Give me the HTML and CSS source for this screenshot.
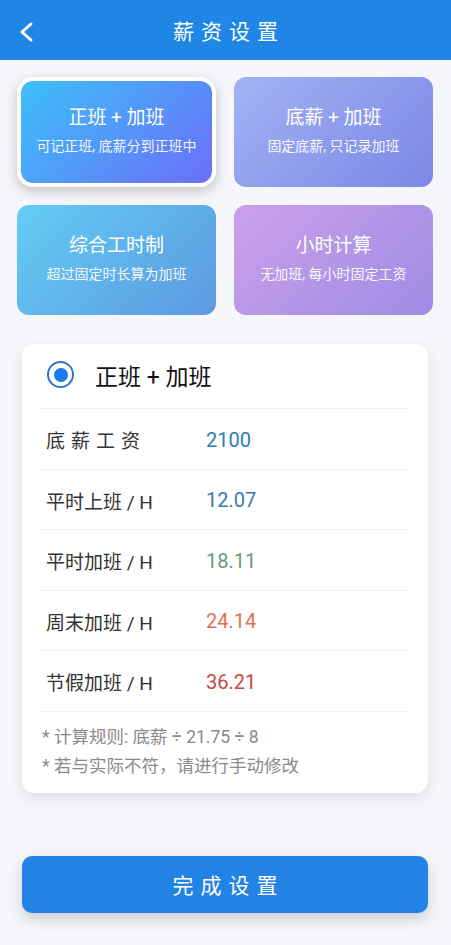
FILE: index.html
```html
<!DOCTYPE html>
<html lang="zh-CN">
<head>
  <meta charset="UTF-8">
  <meta name="viewport" content="width=device-width, initial-scale=1.0">
  <title>薪资设置</title>
  <link rel="stylesheet" href="styles.css">
</head>
<body>
  <header class="topbar">
    <span class="back">
      <svg width="16" height="22" viewBox="0 0 16 22"><path d="M13 3 L4 11 L13 19" fill="none" stroke="#fff" stroke-width="3" stroke-linecap="round" stroke-linejoin="round"/></svg>
    </span>
    <h1>薪资设置</h1>
  </header>

  <div class="modes">
    <div class="mode mode-a selected">
      <div class="mode-title">正班 + 加班</div>
      <div class="mode-sub">可记正班, 底薪分到正班中</div>
    </div>
    <div class="mode mode-b">
      <div class="mode-title">底薪 + 加班</div>
      <div class="mode-sub">固定底薪, 只记录加班</div>
    </div>
    <div class="mode mode-c">
      <div class="mode-title">综合工时制</div>
      <div class="mode-sub">超过固定时长算为加班</div>
    </div>
    <div class="mode mode-d">
      <div class="mode-title">小时计算</div>
      <div class="mode-sub">无加班, 每小时固定工资</div>
    </div>
  </div>

  <div class="panel">
    <div class="panel-head">
      <span class="radio"></span>
      <span class="panel-title">正班 + 加班</span>
    </div>
    <div class="row">
      <span class="label spaced">底薪工资</span>
      <span class="value v-base">2100</span>
    </div>
    <div class="row">
      <span class="label">平时上班 / H</span>
      <span class="value v-normal">12.07</span>
    </div>
    <div class="row">
      <span class="label">平时加班 / H</span>
      <span class="value v-over">18.11</span>
    </div>
    <div class="row">
      <span class="label">周末加班 / H</span>
      <span class="value v-weekend">24.14</span>
    </div>
    <div class="row">
      <span class="label">节假加班 / H</span>
      <span class="value v-holiday">36.21</span>
    </div>
    <div class="notes">
      <p>* 计算规则: 底薪 ÷ 21.75 ÷ 8</p>
      <p>* 若与实际不符，请进行手动修改</p>
    </div>
  </div>

  <button class="done">完成设置</button>
</body>
</html>
```

FILE: styles.css
```css
/* Reset */
body, h1, p, button {
  margin: 0;
  padding: 0;
  box-sizing: border-box;
}

body {
  font-family: Roboto, "Noto Sans CJK SC", sans-serif;
  background-color: #f4f6f9;
  min-height: 100vh;
  padding-bottom: 30px;
}

/* Header */
.topbar {
  position: relative;
  height: 60px;
  background-color: #2086e5;
  color: #ffffff;
  display: flex;
  align-items: center;
  justify-content: center;
}

.topbar h1 {
  font-size: 21px;
  font-weight: 400;
  letter-spacing: 7px;
  padding-left: 7px;
}

.back {
  position: absolute;
  left: 18px;
  top: 21px;
  display: flex;
}

/* Mode cards */
.modes {
  display: grid;
  grid-template-columns: 199px 199px;
  gap: 18px;
  padding: 17px 18px 0 17px;
}

.mode {
  height: 110px;
  border-radius: 12px;
  color: #ffffff;
  display: flex;
  flex-direction: column;
  align-items: center;
  justify-content: center;
  gap: 7px;
  padding-bottom: 4px;
  box-sizing: border-box;
}

.mode.selected {
  border: 4px solid #ffffff;
  border-radius: 16px;
  box-shadow: 0 4px 12px rgba(0, 0, 0, 0.22);
}

.mode-title {
  font-size: 19px;
  line-height: 24px;
}

.mode-sub {
  font-size: 14px;
  line-height: 18px;
  opacity: 0.92;
}

.mode-a { background: linear-gradient(135deg, #3cc0f9, #6c6ef9); }
.mode-b { background: linear-gradient(135deg, #a4b2f4, #7a87e5); }
.mode-c { background: linear-gradient(135deg, #63ccf6, #5c99df); }
.mode-d { background: linear-gradient(135deg, #cca0ea, #9d8ce5); }

/* Detail panel */
.panel {
  margin: 29px 23px 0 22px;
  padding: 0 19px 0 18px;
  background-color: #ffffff;
  border-radius: 12px;
  box-shadow: 0 5px 14px rgba(0, 0, 0, 0.09);
}

.panel-head {
  height: 65px;
  display: flex;
  align-items: center;
  gap: 21px;
  padding: 0 0 3px 7px;
  border-bottom: 1px solid #ececec;
  box-sizing: border-box;
}

.radio {
  width: 27px;
  height: 27px;
  border: 2px solid #2b78c7;
  border-radius: 50%;
  box-sizing: border-box;
  display: flex;
  align-items: center;
  justify-content: center;
}

.radio::after {
  content: "";
  width: 14px;
  height: 14px;
  border-radius: 50%;
  background-color: #1a7af0;
}

.panel-title {
  font-size: 23px;
  color: #111111;
}

.row {
  height: 60.5px;
  display: flex;
  align-items: center;
  padding: 2px 0 0 6px;
  border-bottom: 1px solid #efefef;
  box-sizing: border-box;
}

.label {
  width: 160px;
  font-size: 19px;
  color: #333333;
}

.label.spaced {
  letter-spacing: 6px;
}

.value {
  font-size: 20px;
}

.v-base { color: #2f7dbb; }
.v-normal { color: #3a78b0; }
.v-over { color: #5f9a7f; }
.v-weekend { color: #e0714f; }
.v-holiday { color: #c84747; }

.notes {
  padding: 11px 0 12px 2px;
  font-size: 17.5px;
  line-height: 29px;
  color: #8a8a8a;
}

/* Bottom button */
.done {
  display: block;
  width: 406px;
  height: 57px;
  margin: 63px 0 0 22px;
  background-color: #2283e5;
  color: #ffffff;
  border: none;
  border-radius: 10px;
  font-family: "Noto Sans CJK SC", sans-serif;
  font-size: 21px;
  letter-spacing: 7px;
  padding-left: 7px;
  box-shadow: 0 6px 14px rgba(0, 0, 0, 0.16);
  cursor: pointer;
}
```
